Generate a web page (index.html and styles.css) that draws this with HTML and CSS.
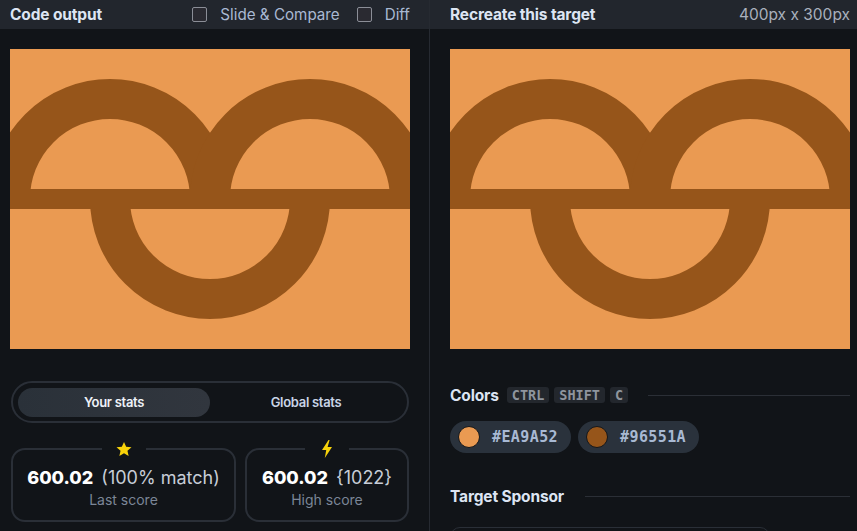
FILE: index.html
```html
<!DOCTYPE html>
<html>
<head>
<meta charset="utf-8">
<link rel="stylesheet" href="styles.css">
</head>
<body>
<div class="app">
  <section class="panel left">
    <header class="bar">
      <span class="title">Code output</span>
      <div class="opts">
        <label class="opt"><span class="box"></span>Slide &amp; Compare</label>
        <label class="opt"><span class="box"></span>Diff</label>
      </div>
    </header>
    <div class="body">
      <div class="art">
        <svg width="400" height="300" viewBox="0 0 400 300">
          <defs>
            <clipPath id="ta"><rect width="400" height="150"/></clipPath>
            <clipPath id="ba"><rect y="150" width="400" height="150"/></clipPath>
          </defs>
          <rect width="400" height="300" fill="#EA9A52"/>
          <g fill="none" stroke="#96551A" stroke-width="40">
            <circle cx="100" cy="150" r="100" clip-path="url(#ta)"/>
            <circle cx="300" cy="150" r="100" clip-path="url(#ta)"/>
            <circle cx="200" cy="150" r="100" clip-path="url(#ba)"/>
          </g>
          <rect y="140" width="400" height="20" fill="#96551A"/>
        </svg>
      </div>
      <div class="toggle">
        <button class="tab active">Your stats</button>
        <button class="tab">Global stats</button>
      </div>
      <div class="cards">
        <div class="card wide">
          <span class="badge">
            <svg width="18" height="18" viewBox="0 0 24 24"><path d="M12 2.5l2.9 6.6 7.1.6-5.4 4.7 1.6 7-6.2-3.7-6.2 3.7 1.6-7L2 9.7l7.1-.6z" fill="#F7D20A"/></svg>
          </span>
          <div class="val"><b>600.02</b> <span>(100% match)</span></div>
          <div class="lbl">Last score</div>
        </div>
        <div class="card">
          <span class="badge">
            <svg width="12" height="18" viewBox="0 0 12 18"><path d="M7.5 0L1 10h4.2L3.8 18 11 7H6.6L8.6 0z" fill="#F7D20A"/></svg>
          </span>
          <div class="val"><b>600.02</b> <span>{1022}</span></div>
          <div class="lbl">High score</div>
        </div>
      </div>
    </div>
  </section>
  <section class="panel right">
    <header class="bar">
      <span class="title">Recreate this target</span>
      <span class="dim">400px x 300px</span>
    </header>
    <div class="body">
      <div class="art">
        <svg width="400" height="300" viewBox="0 0 400 300">
          <defs>
            <clipPath id="tb"><rect width="400" height="150"/></clipPath>
            <clipPath id="bb"><rect y="150" width="400" height="150"/></clipPath>
          </defs>
          <rect width="400" height="300" fill="#EA9A52"/>
          <g fill="none" stroke="#96551A" stroke-width="40">
            <circle cx="100" cy="150" r="100" clip-path="url(#tb)"/>
            <circle cx="300" cy="150" r="100" clip-path="url(#tb)"/>
            <circle cx="200" cy="150" r="100" clip-path="url(#bb)"/>
          </g>
          <rect y="140" width="400" height="20" fill="#96551A"/>
        </svg>
      </div>
      <div class="sechead colors-head">
        <span class="sectitle">Colors</span>
        <kbd>CTRL</kbd><kbd>SHIFT</kbd><kbd>C</kbd>
        <span class="rule"></span>
      </div>
      <div class="chips">
        <div class="chip"><span class="dot light"></span>#EA9A52</div>
        <div class="chip"><span class="dot dark"></span>#96551A</div>
      </div>
      <div class="sechead sponsor-head">
        <span class="sectitle">Target Sponsor</span>
        <span class="rule"></span>
      </div>
      <div class="sponsor"></div>
    </div>
  </section>
</div>
</body>
</html>
```
FILE: styles.css
```css
* { box-sizing: border-box; }
html, body { margin: 0; padding: 0; }
body {
  width: 857px;
  height: 531px;
  overflow: hidden;
  background: #111418;
  font-family: Inter, "Open Sans", "Liberation Sans", sans-serif;
  color: #dfe6f2;
}
.app { display: flex; height: 531px; overflow: hidden; }
.panel { display: flex; flex-direction: column; }
.panel > * { flex-shrink: 0; }
.left { width: 430px; border-right: 1px solid #262a31; }
.right { flex: 1; }
.bar {
  height: 29px;
  background: #22262d;
  display: flex;
  align-items: center;
  justify-content: space-between;
  padding: 0 10px;
}
.right .bar { padding: 0 7px 0 20px; }
.title { font-weight: 700; font-size: 15.5px; letter-spacing: -0.15px; color: #dde5f3; }
.opts { display: flex; align-items: center; gap: 17px; margin-right: 9px; }
.opt { display: flex; align-items: center; gap: 13px; font-size: 15.2px; color: #a9b9d3; letter-spacing: 0; }
.box { width: 15px; height: 15px; border: 1.5px solid #8b8e97; background: #2a2a31; border-radius: 2px; }
.dim { font-size: 15.5px; color: #a9b0bd; letter-spacing: 0; }
.body { display: flex; flex-direction: column; padding: 20px 10px 0; }
.body > * { flex-shrink: 0; }
.right .body { padding: 20px 7px 0 20px; }
.art { width: 400px; height: 300px; }
.art svg { display: block; }
.toggle {
  margin-top: 32px;
  width: 398px;
  height: 42px;
  border: 2px solid #2a2f37;
  border-radius: 21px;
  display: flex;
  align-items: center;
  padding: 0 5px;
  margin-left: 1px;
}
.tab {
  flex: 1;
  height: 29px;
  border: none;
  background: transparent;
  border-radius: 15px;
  font-family: inherit;
  font-size: 13px;
  font-weight: 600;
  letter-spacing: -0.3px;
  color: #c9d4e6;
}
.tab.active { background: linear-gradient(90deg, #2a3139, #31363e); color: #eef2f8; }
.cards { display: flex; gap: 9px; margin-top: 25px; margin-left: 1px; }
.card {
  position: relative;
  width: 164px;
  height: 74px;
  border: 2px solid #2a2f37;
  border-radius: 14px;
  display: flex;
  flex-direction: column;
  align-items: center;
  justify-content: center;
  padding-top: 4px;
}
.card.wide { width: 225px; }
.badge {
  position: absolute;
  top: -11px;
  left: 50%;
  transform: translateX(-50%);
  width: 44px;
  height: 20px;
  background: #111418;
  display: flex;
  align-items: center;
  justify-content: center;
}
.val { font-size: 18px; color: #c7cdd7; white-space: nowrap; letter-spacing: 0; }
.val b { color: #ffffff; font-weight: 800; margin-right: 3px; }
.lbl { margin-top: 3px; font-size: 14px; color: #7b8697; letter-spacing: 0; }
.sechead { display: flex; align-items: center; }
.colors-head { margin-top: 37px; height: 18px; }
.sectitle { font-weight: 700; font-size: 15.5px; color: #dde5f3; letter-spacing: -0.15px; }
kbd {
  font-family: "DejaVu Sans Mono", "Liberation Mono", monospace;
  font-weight: 700;
  font-size: 13.5px;
  color: #8f959e;
  background: #23272d;
  border-radius: 3px;
  padding: 0 5px;
  margin-left: 5px;
  line-height: 16px;
}
.colors-head .sectitle { margin-right: 3px; }
.rule { flex: 1; height: 1px; background: #2b2f36; margin-left: 20px; }
.chips { display: flex; gap: 7px; margin-top: 17px; }
.chip {
  height: 32px;
  border-radius: 16px;
  background: #2a323c;
  display: flex;
  align-items: center;
  padding: 0 13px 0 8px;
  gap: 12px;
  font-family: "DejaVu Sans Mono", "Liberation Mono", monospace;
  font-weight: 700;
  font-size: 15px;
  color: #a8b9d3;
  letter-spacing: 0.4px;
}
.dot { width: 22px; height: 22px; border-radius: 50%; border: 1.5px solid #14171b; }
.dot.light { background: #EA9A52; }
.dot.dark { background: #96551A; }
.sponsor-head { margin-top: 34px; height: 18px; }
.sponsor-head .rule { margin-left: 21px; }
.sponsor {
  margin-top: 22px;
  width: 320px;
  height: 40px;
  border: 1.5px solid #2a2f37;
  border-radius: 10px;
}
```
